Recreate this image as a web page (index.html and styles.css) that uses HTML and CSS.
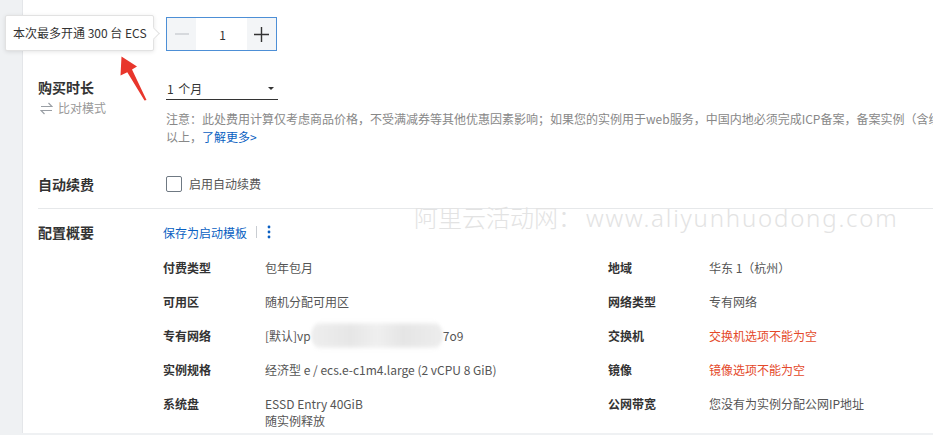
FILE: index.html
```html
<!DOCTYPE html>
<html lang="zh-CN">
<head>
<meta charset="utf-8">
<title>ECS</title>
<link rel="stylesheet" href="styles.css">
</head>
<body>
<div class="page">
  <aside class="side"></aside>
  <main class="panel">
    <div class="row row-qty">
      <div class="label"></div>
      <div class="stepper">
        <span class="step minus"><svg width="14" height="14" viewBox="0 0 14 14"><path d="M0 7H14" stroke="#c3c7cc" stroke-width="1.2"/></svg></span>
        <span class="val">1</span>
        <span class="step plus"><svg width="15" height="15" viewBox="0 0 15 15"><path d="M0 7.5H15M7.5 0V15" stroke="#333" stroke-width="1.4"/></svg></span>
      </div>
    </div>

    <div class="row row-dur">
      <div class="label">
        <div class="ltitle">购买时长</div>
        <div class="compare"><svg width="13" height="13" viewBox="0 0 13 13"><path d="M1 4.5H12L8.5 1M12 8.5H1L4.5 12" fill="none" stroke="#9a9fa5" stroke-width="1.2"/></svg><span>比对模式</span></div>
      </div>
      <div class="content">
        <div class="select"><span>1 个月</span><span class="caret"></span></div>
        <p class="note"><span class="line">注意：此处费用计算仅考虑商品价格，不受满减券等其他优惠因素影响；如果您的实例用于web服务，中国内地必须完成ICP备案，备案实例（含续</span><span class="line">以上，<a class="link" href="#">了解更多&gt;</a></span></p>
      </div>
    </div>

    <div class="row row-renew">
      <div class="label ltitle">自动续费</div>
      <label class="check"><span class="box"></span><span>启用自动续费</span></label>
    </div>

    <div class="divider"></div>

    <div class="row row-summary">
      <div class="label label-narrow ltitle">配置概要</div>
      <div class="content">
        <div class="sum-head">
          <a class="link" href="#">保存为启动模板</a>
          <span class="sep"></span>
          <svg class="more" width="4" height="14" viewBox="0 0 4 14"><circle cx="2" cy="2" r="1.4" fill="#0a5fc2"/><circle cx="2" cy="7" r="1.4" fill="#0a5fc2"/><circle cx="2" cy="12" r="1.4" fill="#0a5fc2"/></svg>
        </div>
        <div class="grid">
          <div class="k">付费类型</div><div class="v">包年包月</div>
          <div class="k">地域</div><div class="v">华东 1（杭州）</div>

          <div class="k">可用区</div><div class="v">随机分配可用区</div>
          <div class="k">网络类型</div><div class="v">专有网络</div>

          <div class="k">专有网络</div><div class="v">[默认]vp<span class="blur"></span>7o9</div>
          <div class="k">交换机</div><div class="v err">交换机选项不能为空</div>

          <div class="k">实例规格</div><div class="v">经济型 e / ecs.e-c1m4.large (2 vCPU 8 GiB)</div>
          <div class="k">镜像</div><div class="v err">镜像选项不能为空</div>

          <div class="k">系统盘</div><div class="v">ESSD Entry 40GiB<br>随实例释放</div>
          <div class="k">公网带宽</div><div class="v">您没有为实例分配公网IP地址</div>
        </div>
      </div>
    </div>
  </main>
</div>

<div class="tooltip">本次最多开通 300 台 ECS</div>

<svg class="arrow" width="40" height="50" viewBox="110 52 40 50">
  <polygon points="121.5,56.5 137,66.5 132,69.5 146.5,100 144.5,100.5 127.3,72.3 120.5,75.5" fill="#e8362c"/>
</svg>

<div class="watermark">阿里云活动网：<span class="wm-latin">www.aliyunhuodong.com</span></div>
</body>
</html>
```

FILE: styles.css
```css
* { box-sizing: border-box; }

body {
  margin: 0;
  width: 933px;
  height: 435px;
  overflow: hidden;
  position: relative;
  background: #eff1f3;
  font-family: "Noto Sans CJK SC", "Noto Sans", sans-serif;
  font-size: 12px;
  color: #555;
}

.page {
  display: flex;
  height: 433px;
}

.side {
  width: 23px;
  flex: none;
  background: #eff1f3;
  border-right: 1px solid #e4e6e9;
}

.panel {
  flex: 1;
  background: #fff;
  padding-left: 15px;
  overflow: hidden;
}

.row {
  display: flex;
}

.label {
  width: 128px;
  flex: none;
}

.label-narrow {
  width: 125px;
}

.ltitle {
  font-size: 14px;
  line-height: 20px;
  font-weight: bold;
  color: #333;
}

.content {
  flex: 1;
  min-width: 0;
}

/* quantity */
.row-qty {
  padding-top: 17px;
}

.stepper {
  display: flex;
  width: 111px;
  height: 34px;
  border: 1px solid #4d8fd6;
}

.step {
  width: 29px;
  background: #f3f5f7;
  display: flex;
  align-items: center;
  justify-content: center;
}

.val {
  flex: 1;
  display: flex;
  align-items: center;
  justify-content: center;
  padding-left: 2px;
  color: #333;
  font-size: 12px;
}

/* duration */
.row-dur {
  margin-top: 26px;
}

.compare {
  margin-top: 2px;
  margin-left: 2px;
  display: flex;
  align-items: center;
  gap: 5px;
  line-height: 18px;
  color: #999;
  font-size: 12px;
}

.select {
  margin-top: 1px;
  width: 112px;
  height: 22px;
  border-bottom: 1px solid #333;
  display: flex;
  align-items: center;
  justify-content: space-between;
  padding: 0 4px 0 1px;
  color: #333;
  font-size: 12px;
  word-spacing: 2px;
}

.caret {
  width: 0;
  height: 0;
  border-left: 3px solid transparent;
  border-right: 3px solid transparent;
  border-top: 3px solid #333;
}

.note {
  margin: 10px 0 0;
  line-height: 18px;
  color: #888;
  white-space: nowrap;
}

.note .line {
  display: block;
}

.link {
  color: #0a5fc2;
  text-decoration: none;
}

/* renew */
.row-renew {
  margin-top: 28px;
  align-items: center;
}

.check {
  display: flex;
  align-items: center;
  gap: 7px;
  color: #555;
  line-height: 20px;
}

.box {
  width: 16px;
  height: 16px;
  border: 1px solid #6f7983;
  border-radius: 2px;
}

.divider {
  margin-top: 14px;
  height: 1px;
  background: #e6e8ea;
}

/* summary */
.row-summary {
  margin-top: 13px;
}

.sum-head {
  display: flex;
  align-items: center;
  height: 20px;
}

.sep {
  width: 1px;
  height: 12px;
  background: #c9cdd2;
  margin: 0 10px 0 9px;
}

.grid {
  margin-top: 17px;
  display: grid;
  grid-template-columns: 102px 343px 101px 1fr;
  row-gap: 17px;
  line-height: 17px;
}

.k {
  font-weight: bold;
  color: #333;
}

.v {
  color: #555;
}

.err {
  color: #e4492a;
}

.blur {
  display: inline-block;
  width: 132px;
  height: 17px;
  vertical-align: top;
  border-radius: 9px;
  background: linear-gradient(90deg, #eeeeee 0%, #e6e6e6 30%, #efefef 50%, #e5e5e5 70%, #ededed 100%);
  transform: scaleY(1.4);
  filter: blur(1.5px);
}

/* overlays */
.tooltip {
  position: absolute;
  left: 5px;
  top: 15px;
  width: 149px;
  height: 36px;
  background: #fff;
  border: 1px solid #e2e2e2;
  border-radius: 2px;
  box-shadow: 0 1px 4px rgba(0, 0, 0, 0.1);
  padding-left: 7px;
  line-height: 34px;
  color: #333;
  font-size: 12px;
  white-space: nowrap;
}

.tooltip::after {
  content: "";
  position: absolute;
  right: -5px;
  top: 13px;
  width: 8px;
  height: 8px;
  background: #fff;
  border-top: 1px solid #e2e2e2;
  border-right: 1px solid #e2e2e2;
  transform: rotate(45deg);
}

.arrow {
  position: absolute;
  left: 110px;
  top: 52px;
}

.watermark {
  position: absolute;
  left: 414px;
  top: 204px;
  font-size: 24px;
  line-height: 28px;
  color: #e3e3e3;
  white-space: nowrap;
  font-family: "Noto Sans", "Noto Sans CJK SC", sans-serif;
  font-weight: 300;
}

.wm-latin {
  margin-left: 4px;
  letter-spacing: 1.8px;
}
```
